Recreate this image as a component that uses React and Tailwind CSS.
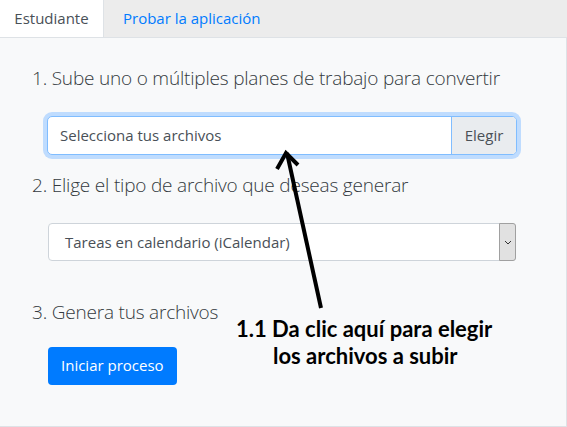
import React from 'react'

const App = () => {
  return (
    <div className="relative w-[567px] h-[427px] bg-white overflow-hidden" style={{ fontFamily: '"Open Sans", "Noto Sans", sans-serif' }}>
      <div className="flex h-[37px] bg-[#ececec] text-[15px]">
        <div className="w-[104px] bg-white flex items-center justify-center text-[#495057] border-r border-[#dee2e6]">
          Estudiante
        </div>
        <div className="px-[19px] flex items-center text-[#007bff]">Probar la aplicación</div>
      </div>

      <div className="h-[390px] bg-[#f8f9fa] border-t border-r border-b border-[#dee2e6] pl-[32px] pr-[50px]">
        <p className="mt-[26px] text-[19px] font-light text-[#343a40] tracking-[-0.2px]">
          1. Sube uno o múltiples planes de trabajo para convertir
        </p>
        <div className="ml-[15px] mt-[23px] w-[470px] h-[39px] rounded-[5px] ring-4 ring-[#bfdcfe] border border-[#80bdff] flex bg-white text-[15px] text-[#495057]">
          <div className="flex-1 flex items-center pl-[12px]">Selecciona tus archivos</div>
          <div className="w-[65px] flex items-center justify-center bg-[#e9ecef] border-l border-[#80bdff] rounded-r-[4px]">Elegir</div>
        </div>

        <p className="mt-[16px] text-[19px] font-light text-[#343a40] tracking-[-0.2px]">
          2. Elige el tipo de archivo que deseas generar
        </p>
        <div className="ml-[16px] mt-[24px] w-[468px] h-[38px] rounded-[4px] border border-[#ced4da] bg-white flex text-[15px] text-[#495057]">
          <div className="flex-1 flex items-center pl-[16px]">Tareas en calendario (iCalendar)</div>
          <div className="w-[17px] my-[-1px] mr-[-1px] bg-[#e1e1e1] border border-[#a0a0a0] rounded-r-[3px] flex items-center justify-center">
            <svg width="8" height="5" viewBox="0 0 8 5"><path d="M1 1 L4 4 L7 1" fill="none" stroke="#333" strokeWidth="1" /></svg>
          </div>
        </div>

        <p className="mt-[37px] text-[19px] font-light text-[#343a40] tracking-[-0.2px]">3. Genera tus archivos</p>
        <button className="ml-[16px] mt-[20px] h-[38px] px-[13px] rounded-[4px] bg-[#007bff] text-white text-[15px]">
          Iniciar proceso
        </button>
      </div>

      <div className="absolute left-[236px] top-[315px] text-[22px] font-bold text-black leading-[27px]" style={{ fontFamily: 'Lato, "Open Sans", sans-serif' }}>
        <div>1.1 Da clic aquí para elegir</div>
        <div className="pl-[37px]">los archivos a subir</div>
      </div>

      <svg className="absolute left-0 top-0 pointer-events-none" width="567" height="427">
        <line x1="321" y1="308" x2="287" y2="153" stroke="#000" strokeWidth="4" />
        <polyline points="277,169 286,153 298,165" fill="none" stroke="#000" strokeWidth="4" strokeLinejoin="miter" />
      </svg>
    </div>
  )
}

export default App
